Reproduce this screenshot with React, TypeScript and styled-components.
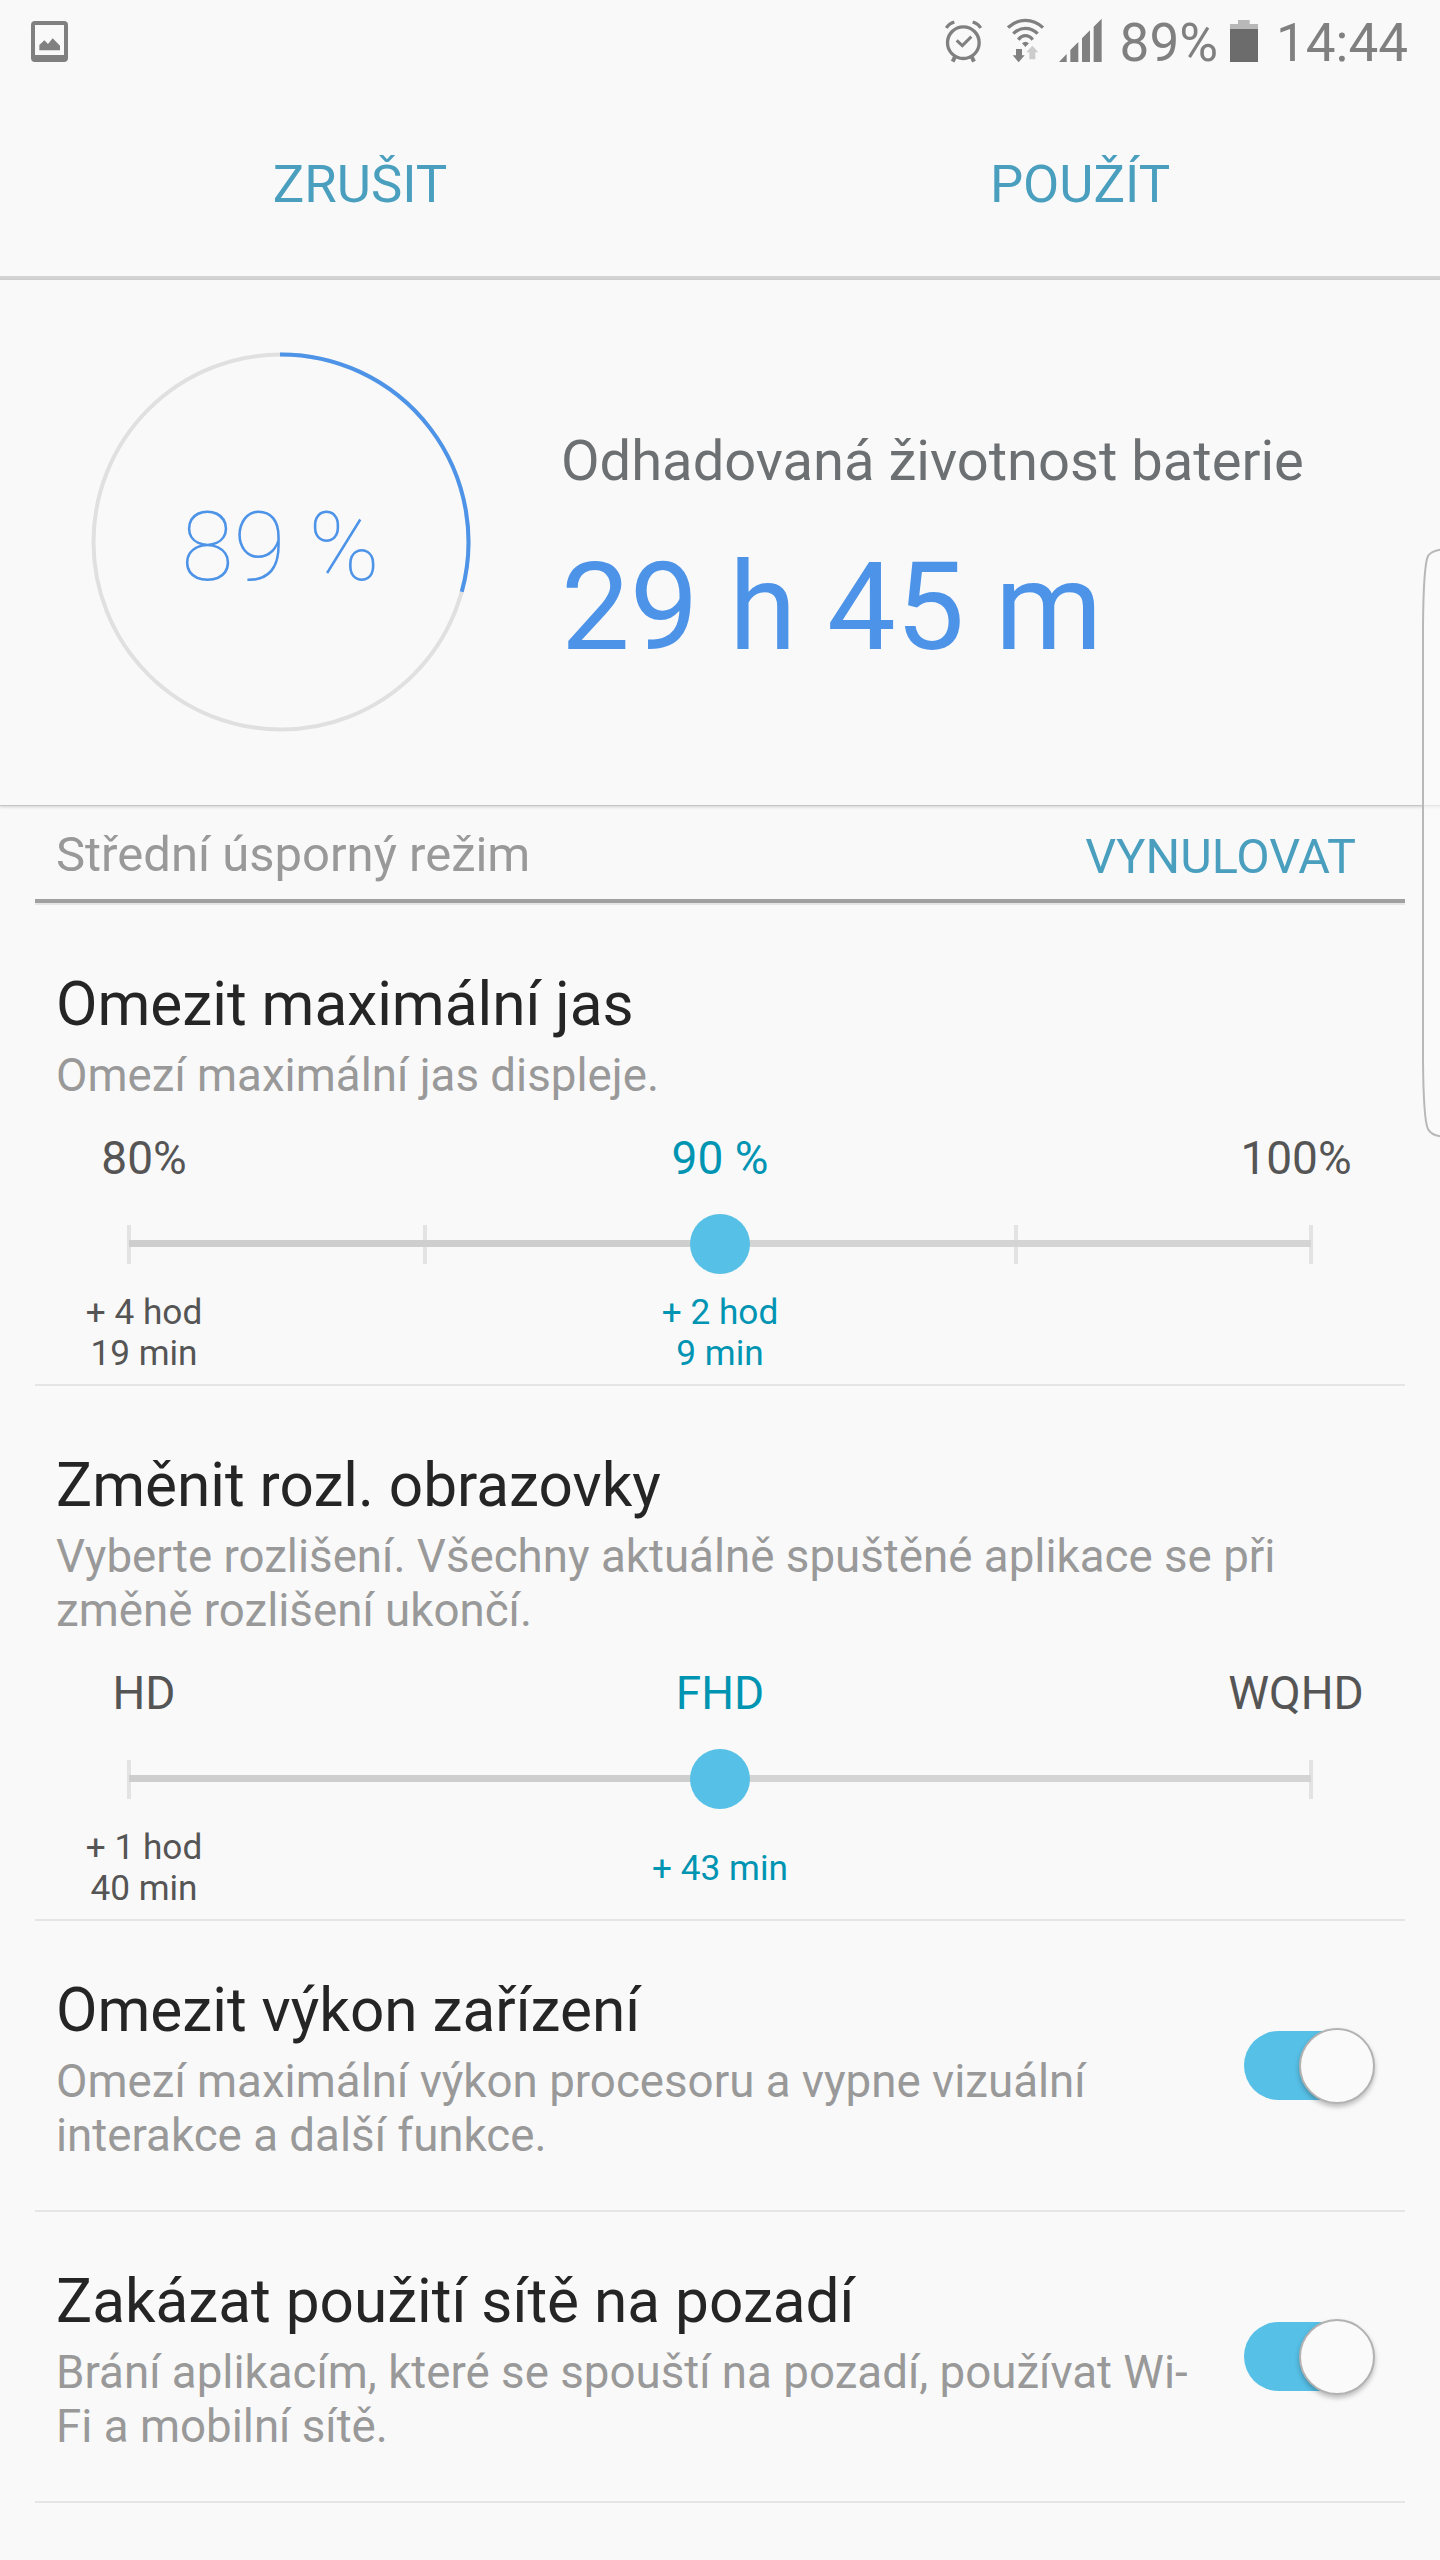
import React from 'react';
import styled, { createGlobalStyle } from 'styled-components';

const GlobalStyle = createGlobalStyle`
  * { box-sizing: border-box; }
  body { margin: 0; background: #f9f9f9; }
`;

const accent = '#4a9fbf';
const blue = '#4d93e8';
const selected = '#0094b3';
const cyan = '#57c0e6';

const Screen = styled.div`
  position: relative;
  width: 1440px;
  height: 2560px;
  overflow: hidden;
  background: #f9f9f9;
  font-family: Roboto, 'Liberation Sans', sans-serif;
`;

const StatusBar = styled.div`
  display: flex;
  align-items: flex-start;
  height: 84px;
  padding: 18px 32px 0 31px;
`;

const Icon = styled.svg<{ $left?: number }>`
  flex: none;
  display: block;
  margin-left: ${(p) => p.$left ?? 0}px;
`;

const StatusGroup = styled.div`
  display: flex;
  align-items: flex-start;
  margin-left: auto;
`;

const StatusText = styled.span<{ $left: number }>`
  margin: -6px 0 0 ${(p) => p.$left}px;
  font-size: 53px;
  line-height: 62px;
  color: #808080;
`;

const Actions = styled.div`
  display: grid;
  grid-template-columns: 1fr 1fr;
  height: 196px;
  padding-top: 8px;
  border-bottom: 4px solid #d3d3d3;
`;

const Action = styled.button`
  border: 0;
  padding: 0;
  background: none;
  font: 400 52.7px/62px Roboto, sans-serif;
  color: ${accent};
`;

const Summary = styled.section`
  display: flex;
  height: 526px;
  padding: 72px 0 0 90.5px;
  border-bottom: 1px solid #c6c6c6;
  box-shadow: 0 1px 3px rgba(0, 0, 0, 0.16);
`;

const Ring = styled.div`
  display: grid;
  width: 380px;
  height: 380px;
  place-items: center;

  > * {
    grid-area: 1 / 1;
  }
`;

const RingValue = styled.span`
  padding-top: 10px;
  font-size: 95.5px;
  line-height: 112px;
  font-weight: 100;
  color: ${blue};
`;

const Estimate = styled.div`
  margin-left: 90.5px;
  padding-top: 76px;
`;

const EstimateLabel = styled.div`
  font-size: 56.1px;
  line-height: 66px;
  color: #6c7072;
`;

const EstimateValue = styled.div`
  margin-top: 41px;
  font-size: 122.5px;
  line-height: 144px;
  color: ${blue};
`;

const Body = styled.main`
  padding: 0 35px;
`;

const ModeBar = styled.div`
  display: flex;
  justify-content: space-between;
  height: 97px;
  padding: 21px 49px 0 21px;
  border-bottom: 4px solid #a0a0a0;
  font-size: 49px;
  line-height: 56px;
`;

const ModeName = styled.span`
  color: #999;
`;

const Reset = styled.button`
  height: 56px;
  margin-top: 2px;
  border: 0;
  padding: 0;
  background: none;
  font: 400 48.6px/56px Roboto, sans-serif;
  color: ${accent};
`;

const Underline = styled.div`
  height: 2px;
  background: #e5e5e5;
`;

const Section = styled.section`
  padding: 65px 0 10px;
  border-bottom: 2px solid #e5e5e5;
`;

const Heading = styled.h2`
  margin: 0 21px 9px;
  font-size: 60.3px;
  line-height: 70px;
  font-weight: 400;
  color: #252525;
`;

const Description = styled.p`
  margin: 0 21px;
  font-size: 45.7px;
  line-height: 54px;
  color: #999;
  white-space: pre-line;
`;

const Scale = styled.div<{ $notes?: boolean }>`
  display: flex;
  justify-content: space-between;
  align-items: center;
  margin-top: ${(p) => (p.$notes ? 18 : 28)}px;
  min-height: ${(p) => (p.$notes ? 82 : 54)}px;
  font-size: ${(p) => (p.$notes ? 35.2 : 46)}px;
  line-height: ${(p) => (p.$notes ? 41 : 54)}px;
`;

const Stop = styled.div<{ $active?: boolean }>`
  width: 218px;
  text-align: center;
  white-space: pre-line;
  color: ${(p) => (p.$active ? selected : '#555')};
`;

const Slider = styled.div`
  display: grid;
  height: 60px;
  margin: 29px 94px 0;

  > * {
    grid-area: 1 / 1;
  }
`;

const Ticks = styled.div`
  display: flex;
  justify-content: space-between;
  height: 39px;
  margin: 11px -2px 0;
`;

const Tick = styled.i`
  width: 4px;
  background: #e3e3e3;
`;

const Rail = styled.div`
  height: 7px;
  margin-top: 26px;
  background: linear-gradient(90deg, #cecece 50%, #d4d4d4 50%);
`;

const Thumb = styled.div`
  width: 60px;
  height: 60px;
  justify-self: center;
  border-radius: 50%;
  background: ${cyan};
`;

const SwitchRow = styled.section`
  display: flex;
  justify-content: space-between;
  align-items: center;
  height: 291px;
  padding: 8px 30px 0 0;
  border-bottom: 2px solid #e5e5e5;
`;

const SwitchTrack = styled.div`
  display: flex;
  justify-content: flex-end;
  align-items: center;
  width: 131px;
  height: 69px;
  margin-bottom: 8px;
  border-radius: 35px;
  background: linear-gradient(90deg, ${cyan} 80%, transparent 80%);
`;

const Knob = styled.div`
  flex: none;
  width: 76px;
  height: 76px;
  border: 2px solid #b2b2b2;
  border-radius: 50%;
  background: #fafafa;
  box-shadow: 0 3px 5px rgba(0, 0, 0, 0.25);
`;

const EdgeHandle = styled.svg`
  position: absolute;
  top: 546px;
  right: 0;
`;

interface StopData {
  label: string;
  note: string;
  active?: boolean;
}

interface LevelProps {
  title: string;
  text: string;
  ticks: number;
  stops: StopData[];
}

const Level = ({ title, text, ticks, stops }: LevelProps) => (
  <Section>
    <Heading>{title}</Heading>
    <Description>{text}</Description>
    <Scale>
      {stops.map((s) => (
        <Stop key={s.label} $active={s.active}>{s.label}</Stop>
      ))}
    </Scale>
    <Slider>
      <Ticks>
        {Array.from({ length: ticks }, (_, i) => <Tick key={i} />)}
      </Ticks>
      <Rail />
      <Thumb />
    </Slider>
    <Scale $notes>
      {stops.map((s) => (
        <Stop key={s.label} $active={s.active}>{s.note}</Stop>
      ))}
    </Scale>
  </Section>
);

const Toggle = ({ title, text }: { title: string; text: string }) => (
  <SwitchRow>
    <div>
      <Heading>{title}</Heading>
      <Description>{text}</Description>
    </div>
    <SwitchTrack>
      <Knob />
    </SwitchTrack>
  </SwitchRow>
);

const PictureIcon = () => (
  <Icon width="37" height="44.67" viewBox="93 54 111 134">
    <path fill="#808080" fillRule="evenodd" d="M105 63H192Q204 63 204 75V174Q204 186 192 186H105Q93 186 93 174V75Q93 63 105 63ZM105 75V165H192V75Z" />
    <path fill="#808080" d="M118 151V135L133 121L144 132L158 115L180 137V151Z" />
  </Icon>
);

const AlarmIcon = () => (
  <Icon width="37" height="44.67" viewBox="75 54 111 134" fill="none" stroke="#808080">
    <circle cx="130" cy="128" r="47.500" strokeWidth="10" />
    <path strokeWidth="9" d="M110 121L127 137L154 110" />
    <path strokeWidth="12" d="M106 168L98 185M154 168L162 185" />
    <path strokeWidth="10" d="M79 84Q86 71 103 66M182 84Q175 71 158 66" />
  </Icon>
);

const WifiIcon = () => (
  <Icon $left={25} width="37.33" height="44.67" viewBox="261 54 112 134">
    <g fill="none" stroke="#808080" strokeWidth="10">
      <path d="M264 83Q287 61 316 61Q346 61 369 83" />
      <path d="M280 101Q296 85 316 85Q337 85 353 101" />
      <path d="M295 119Q304 107 316 107Q329 107 338 119" />
    </g>
    <path fill="#808080" d="M306 130Q316 121 327 130L316 141ZM288 147H306V166H314L296 187L278 166H288Z" />
    <path fill="#ccc" d="M337 137L355 157H346V178H328V157H319Z" />
  </Icon>
);

const SignalIcon = () => (
  <Icon $left={14} width="43" height="44.67" viewBox="415 54 129 134">
    <path fill="#808080" d="M415 186L438 162V186ZM449 186V150L473 126V186ZM484 186V115L508 91V186ZM519 186V80L543 56V186Z" />
  </Icon>
);

const BatteryIcon = () => (
  <Icon $left={12} width="28" height="44.67" viewBox="927 54 84 134">
    <path fill="#b8b8b8" d="M951 60H986V72H1011V87H927V72H951Z" />
    <path fill="#6c6c6c" d="M927 87H1011V186H927Z" />
  </Icon>
);

const RING_RADIUS = 187.5;
const sweep = (105.4 * Math.PI) / 180;
const arcX = 190 + RING_RADIUS * Math.sin(sweep);
const arcY = 190 - RING_RADIUS * Math.cos(sweep);

export default function App() {
  return (
    <Screen>
      <GlobalStyle />
      <StatusBar>
        <PictureIcon />
        <StatusGroup>
          <AlarmIcon />
          <WifiIcon />
          <SignalIcon />
          <StatusText $left={18}>89%</StatusText>
          <BatteryIcon />
          <StatusText $left={18}>14:44</StatusText>
        </StatusGroup>
      </StatusBar>
      <Actions>
        <Action>ZRUŠIT</Action>
        <Action>POUŽÍT</Action>
      </Actions>
      <Summary>
        <Ring>
          <svg width="380" height="380" viewBox="0 0 380 380" fill="none" strokeWidth="4">
            <circle cx="190" cy="190" r={RING_RADIUS} stroke="#e0e0e0" />
            <path stroke={blue} d={`M189 2.5H190A${RING_RADIUS} ${RING_RADIUS} 0 0 1 ${arcX} ${arcY}`} />
          </svg>
          <RingValue>89 %</RingValue>
        </Ring>
        <Estimate>
          <EstimateLabel>Odhadovaná životnost baterie</EstimateLabel>
          <EstimateValue>29 h 45 m</EstimateValue>
        </Estimate>
      </Summary>
      <Body>
        <ModeBar>
          <ModeName>Střední úsporný režim</ModeName>
          <Reset>VYNULOVAT</Reset>
        </ModeBar>
        <Underline />
        <Level
          title="Omezit maximální jas"
          text="Omezí maximální jas displeje."
          ticks={5}
          stops={[
            { label: '80%', note: '+ 4 hod\n19 min' },
            { label: '90 %', note: '+ 2 hod\n9 min', active: true },
            { label: '100%', note: '' },
          ]}
        />
        <Level
          title="Změnit rozl. obrazovky"
          text={'Vyberte rozlišení. Všechny aktuálně spuštěné aplikace se při\nzměně rozlišení ukončí.'}
          ticks={2}
          stops={[
            { label: 'HD', note: '+ 1 hod\n40 min' },
            { label: 'FHD', note: '+ 43 min', active: true },
            { label: 'WQHD', note: '' },
          ]}
        />
        <Toggle
          title="Omezit výkon zařízení"
          text={'Omezí maximální výkon procesoru a vypne vizuální\ninterakce a další funkce.'}
        />
        <Toggle
          title="Zakázat použití sítě na pozadí"
          text={'Brání aplikacím, které se spouští na pozadí, používat Wi-\nFi a mobilní sítě.'}
        />
      </Body>
      <EdgeHandle width="18" height="594" viewBox="0 0 18 594">
        <path
          d="M19 3.5Q9 5 6 10Q1.5 20 1 80V514Q1.500 574 6 583Q9 589 19 590.500"
          fill="rgba(250,250,250,0.6)"
          stroke="#b8b8b8"
          strokeWidth="2"
        />
      </EdgeHandle>
    </Screen>
  );
}
